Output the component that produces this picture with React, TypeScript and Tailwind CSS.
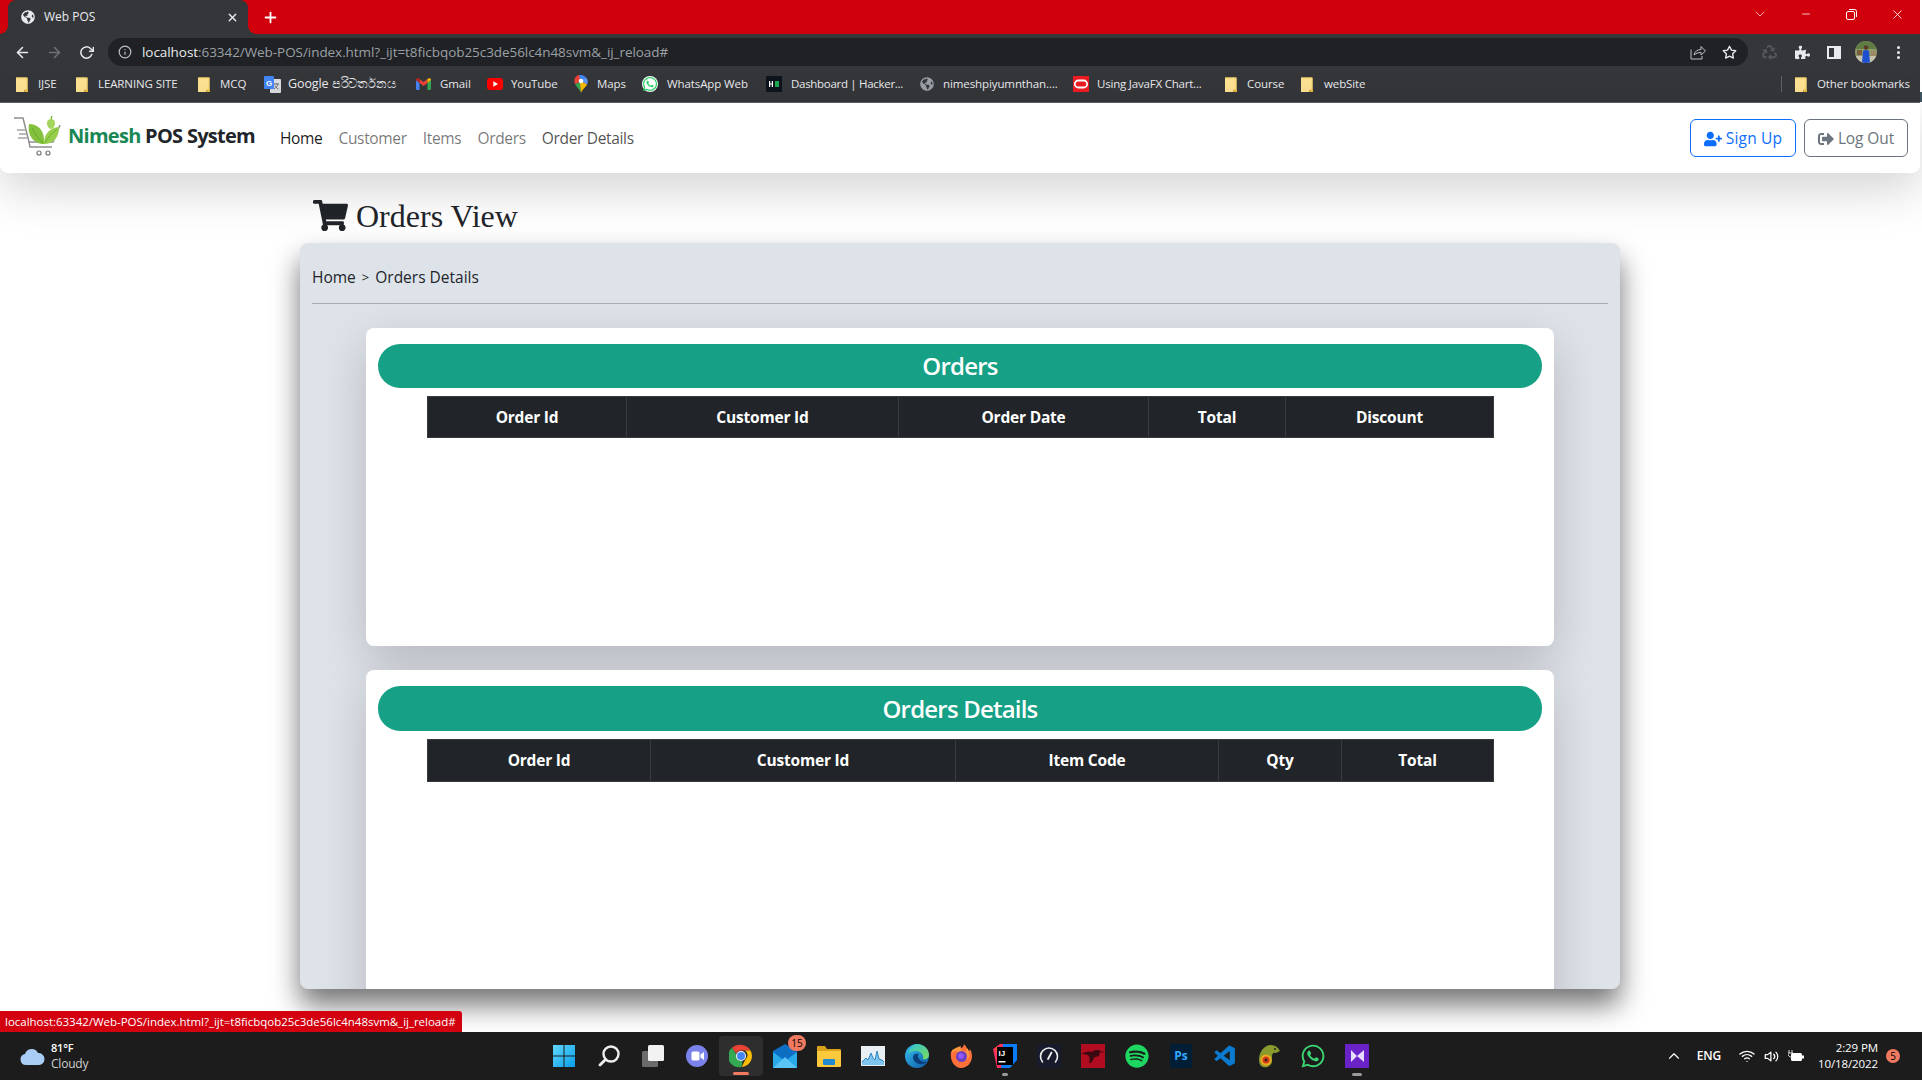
import { FaShoppingCart, FaGlobeAmericas, FaUserPlus, FaSignOutAlt, FaWhatsapp, FaPuzzlePiece, FaSpotify, FaRecycle } from "react-icons/fa";
import { VscVscode } from "react-icons/vsc";
import { FiStar, FiArrowLeft, FiArrowRight, FiRotateCw, FiInfo, FiX, FiPlus, FiMinus, FiChevronDown, FiChevronUp, FiWifi, FiVolume2 } from "react-icons/fi";

const Folder = () => (
  <svg width="12" height="15" viewBox="0 0 12 15" className="shrink-0">
    <path d="M0 .5h11.5V13h-3v2H0z" fill="#fde293" />
    <path d="M8.5 15v-2.5H12V15z" fill="#e8b93a" />
    <path d="M.5 1h10.5v11.5" fill="none" stroke="#f2ce63" strokeWidth="1" />
  </svg>
);
const Translate = () => (
  <svg width="17" height="17" viewBox="0 0 17 17" className="shrink-0">
    <rect x="6" y="3" width="11" height="14" rx="1" fill="#dadce0" />
    <path d="M10 8h5M12.5 7v1M14 8c-.5 2-2 4-4 5M11 9.5c.7 1.500 2 3 3.500 3.500" stroke="#5f6368" strokeWidth=".9" fill="none" />
    <rect width="10" height="13" rx="1" fill="#4285f4" />
    <text x="5" y="9.500" textAnchor="middle" fontSize="8" fontWeight="700" fill="#fff" fontFamily="Liberation Sans">G</text>
  </svg>
);
const Gmail = () => (
  <svg width="15" height="12" viewBox="0 0 15 12" className="shrink-0">
    <path d="M0 2v9a1 1 0 0 0 1 1h2.500V5z" fill="#4285f4" />
    <path d="M15 2v9a1 1 0 0 1-1 1h-2.500V5z" fill="#34a853" />
    <path d="M3.500 5 7.500 8 11.500 5V1L7.500 4 3.500 1z" fill="#ea4335" />
    <path d="M0 2c0-2 2-2.500 3.500-1v4z" fill="#c5221f" />
    <path d="M15 2c0-2-2-2.500-3.500-1v4z" fill="#fbbc04" />
  </svg>
);
const YouTube = () => (
  <svg width="16" height="12" viewBox="0 0 16 12" className="shrink-0">
    <rect width="16" height="12" rx="3" fill="#f00" />
    <path d="M6.300 3.300v5.400L11 6z" fill="#fff" />
  </svg>
);
const MapsPin = () => (
  <svg width="14" height="18" viewBox="0 0 14 18" className="shrink-0">
    <path d="M7 18C5.500 14 2.500 12 1 9l5-2z" fill="#34a853" />
    <path d="M1 9C-1 4 2.500 0 5 0l2 3-1 4z" fill="#ea4335" />
    <path d="M5 0c2-.5 5.500.500 7 2.500L8.500 6 6 3.500z" fill="#4285f4" />
    <path d="M12 2.500C14.500 5.500 14 8 13 9.500L8.500 7V5z" fill="#5e97f6" />
    <path d="M13 9.500C12 12 8.500 14 7 18L6 8l2.500-1z" fill="#fbbc04" />
    <circle cx="7" cy="6" r="2.300" fill="#fff" />
  </svg>
);
const WhatsBadge = () => (
  <span className="flex h-[16px] w-[16px] shrink-0 items-center justify-center rounded-full bg-white">
    <FaWhatsapp size={16} className="text-[#25d366]" />
  </span>
);
const Hacker = () => (
  <svg width="16" height="16" viewBox="0 0 16 16" className="shrink-0">
    <rect width="16" height="16" fill="#0e141e" />
    <path d="M3 5h1.200v2.400h1.600V5H7v6H5.800V8.600H4.200V11H3z" fill="#fff" />
    <rect x="9" y="5" width="4" height="6" fill="#1ba94c" />
  </svg>
);
const Oracle = () => (
  <svg width="16" height="16" viewBox="0 0 16 16" className="shrink-0">
    <rect width="16" height="16" fill="#ed1c24" />
    <rect x="1.800" y="4.500" width="12.400" height="7" rx="3.500" fill="none" stroke="#fff" strokeWidth="1.800" />
  </svg>
);
const Globe = () => <FaGlobeAmericas size={14} className="shrink-0 text-[#9aa0a6]" />;

const bookmarks = [
  { icon: <Folder />, label: "IJSE", w: "w-[20px]", g: "gap-[10px]", m: "mr-[18px]", t: "" },
  { icon: <Folder />, label: "LEARNING SITE", w: "w-[82px]", g: "gap-[10px]", m: "mr-[18px]", t: "" },
  { icon: <Folder />, label: "MCQ", w: "w-[28px]", g: "gap-[10px]", m: "mr-[16px]", t: "" },
  { icon: <Translate />, label: "Google පරිවර්තනය", w: "w-[112px]", g: "gap-[7px]", m: "mr-[16px]", t: "text-[12.500px]" },
  { icon: <Gmail />, label: "Gmail", w: "w-[30px]", g: "gap-[9px]", m: "mr-[17px]", t: "" },
  { icon: <YouTube />, label: "YouTube", w: "w-[46px]", g: "gap-[8px]", m: "mr-[17px]", t: "" },
  { icon: <MapsPin />, label: "Maps", w: "w-[29px]", g: "gap-[9px]", m: "mr-[16px]", t: "" },
  { icon: <WhatsBadge />, label: "WhatsApp Web", w: "w-[82px]", g: "gap-[9px]", m: "mr-[17px]", t: "" },
  { icon: <Hacker />, label: "Dashboard | Hacker...", w: "w-[111px]", g: "gap-[9px]", m: "mr-[18px]", t: "tracking-[-0.3px]" },
  { icon: <Globe />, label: "nimeshpiyumnthan....", w: "w-[113px]", g: "gap-[9px]", m: "mr-[17px]", t: "" },
  { icon: <Oracle />, label: "Using JavaFX Chart...", w: "w-[109px]", g: "gap-[8px]", m: "mr-[19px]", t: "tracking-[-0.2px]" },
  { icon: <Folder />, label: "Course", w: "w-[36px]", g: "gap-[10px]", m: "mr-[18px]", t: "" },
  { icon: <Folder />, label: "webSite", w: "w-[42px]", g: "gap-[11px]", m: "", t: "" },
];

const Logo = () => (
  <svg width="50" height="46" viewBox="0 0 50 46" className="shrink-0">
    <path d="M1 3h9l6 24h24l7-17" fill="none" stroke="#8f8f8f" strokeWidth="1.500" />
    <path d="M4 15h9M6 19h8M5 23h9" stroke="#a5a5a5" strokeWidth="1.300" />
    <path d="M16 27l1 5h22" fill="none" stroke="#8f8f8f" strokeWidth="1.500" />
    <circle cx="26" cy="38" r="2" fill="none" stroke="#777" strokeWidth="1.200" />
    <circle cx="35" cy="38" r="2" fill="none" stroke="#777" strokeWidth="1.200" />
    <path d="M16 9c9 0 16 6 15 20-10 0-17-8-15-20z" fill="#84c13c" />
    <path d="M46 12c0 10-5 17-15 17 0-10 5-16 15-17z" fill="#97cf4d" />
    <path d="M19 13c3 6 6 10 11 15M44 14c-5 4-9 8-12 14" stroke="#5e9e25" strokeWidth=".7" fill="none" />
    <path d="M34 8c0-3 2-4 4-4s4 1 4 4-2 6-4 6-4-3-4-6z" fill="#a4d55c" />
    <path d="M38 4l1-3" stroke="#6fae2f" strokeWidth="1.200" />
  </svg>
);

function DataTable({ cols, h }: { cols: { t: string; w: string }[]; h: string }) {
  return (
    <table className="ml-[49px] mt-2 w-[1066px] table-fixed border-collapse bg-[#212529] text-white">
      <thead>
        <tr className={h}>
          {cols.map((c) => (
            <th key={c.t} className={`${c.w} border border-[#373b3e] pt-px text-center text-[15.500px] font-bold tracking-[-0.2px]`}>
              {c.t}
            </th>
          ))}
        </tr>
      </thead>
    </table>
  );
}

function Panel({ title, cols, pill, row, h }: { title: string; cols: { t: string; w: string }[]; pill: string; row: string; h: string }) {
  return (
    <section className={`${h} shrink-0 rounded-lg bg-white px-3 pt-4 shadow-[0_16px_48px_rgba(0,0,0,0.175)]`}>
      <div className={`${pill} flex items-center justify-center rounded-[22px] bg-[#16a085] text-[24px] font-semibold tracking-[-0.8px] text-white`}>
        {title}
      </div>
      <DataTable cols={cols} h={row} />
    </section>
  );
}

const Win = () => (
  <svg width="24" height="24" viewBox="0 0 24 24">
    <defs>
      <linearGradient id="w1" x1="0" y1="0" x2="1" y2="1"><stop offset="0" stopColor="#5fd8fb" /><stop offset="1" stopColor="#0a9de8" /></linearGradient>
    </defs>
    <path d="M0 1h10.500v10.500H0zM11.500 1H22v10.500H11.500zM0 12.500h10.500V23H0zM11.500 12.500H22V23H11.500z" fill="url(#w1)" />
  </svg>
);
const Search = () => (
  <svg width="24" height="24" viewBox="0 0 24 24" fill="none">
    <circle cx="14" cy="10" r="7.500" stroke="#eee" strokeWidth="2.400" />
    <path d="M8.500 15.500 3 21" stroke="#eee" strokeWidth="2.800" strokeLinecap="round" />
  </svg>
);
const TaskView = () => (
  <svg width="24" height="24" viewBox="0 0 24 24">
    <rect x="1" y="7" width="16" height="16" rx="1.500" fill="#6b6b6b" />
    <rect x="7" y="1" width="16" height="16" rx="1.500" fill="#f2f2f2" />
  </svg>
);
const Chat = () => (
  <svg width="24" height="24" viewBox="0 0 24 24">
    <circle cx="12" cy="12" r="11" fill="#7b83eb" />
    <rect x="6.500" y="7.500" width="8" height="9" rx="1.500" fill="#fff" />
    <path d="M15.500 10.500 19 8v8l-3.500-2.500z" fill="#fff" />
  </svg>
);
const Chrome = () => (
  <svg width="24" height="24" viewBox="0 0 24 24">
    <path d="M12 1a11 11 0 0 1 9.500 5.500H12A5.500 5.500 0 0 0 7 9.500L3 3.800A11 11 0 0 1 12 1z" fill="#ea4335" />
    <path d="M21.500 6.500A11 11 0 0 1 12.500 23l4.300-8A5.500 5.500 0 0 0 16 6.500z" fill="#fbbc04" />
    <path d="M3 3.800 7.500 11a5.500 5.500 0 0 0 6 6.300L12.500 23A11 11 0 0 1 3 3.800z" fill="#34a853" />
    <circle cx="12" cy="12" r="5" fill="#fff" />
    <circle cx="12" cy="12" r="4" fill="#4285f4" />
  </svg>
);
const Mail = () => (
  <svg width="24" height="24" viewBox="0 0 24 24">
    <path d="M0 7 12 0l12 7v17H0z" fill="#0c6fc4" />
    <path d="M0 8 12 17l12-9v16H0z" fill="#29a8ea" />
    <path d="M0 24 12 13l12 11z" fill="#5ac4f6" />
  </svg>
);
const Explorer = () => (
  <svg width="24" height="24" viewBox="0 0 24 24">
    <path d="M0 3a1 1 0 0 1 1-1h7l2 3h13a1 1 0 0 1 1 1v3H0z" fill="#d9a21a" />
    <path d="M0 7h24v15a1 1 0 0 1-1 1H1a1 1 0 0 1-1-1z" fill="#fcc93d" />
    <rect x="6" y="15" width="12" height="6" rx="1" fill="#1f8ad2" />
  </svg>
);
const Perf = () => (
  <svg width="24" height="24" viewBox="0 0 24 24">
    <rect y="2" width="24" height="20" fill="#e9eef2" />
    <path d="M1 18 5 14l2 2 3-7 2 5 2 2 2-9 2 8 3 1 2 2v3H1z" fill="#7ec4ef" />
    <path d="M1 18 5 14l2 2 3-7 2 5 2 2 2-9 2 8 3 1 2 2" fill="none" stroke="#2f86c4" strokeWidth="1" />
  </svg>
);
const Edge = () => (
  <svg width="24" height="24" viewBox="0 0 24 24">
    <defs>
      <linearGradient id="e1" x1="0" y1="0" x2="1" y2="1"><stop offset="0" stopColor="#35c1f1" /><stop offset="1" stopColor="#0c59a4" /></linearGradient>
      <linearGradient id="e2" x1="0" y1="0" x2="1" y2="1"><stop offset="0" stopColor="#30c5d8" /><stop offset="1" stopColor="#7cd957" /></linearGradient>
    </defs>
    <circle cx="12" cy="12" r="12" fill="url(#e1)" />
    <path d="M12 0c7 0 12 5 12 11 0 3-3 5-6 4 1-4-2-8-7-8-3 0-6 1-8 3C5 4 8 0 12 0z" fill="url(#e2)" />
    <path d="M8 13c0 5 5 8 10 7 2-.5 3-1.500 4-3-2 1.500-5 1-7-1-2-2-3-5-1-6-3-1-6 0-6 3z" fill="#0b3f7a" />
  </svg>
);
const Firefox = () => (
  <svg width="24" height="24" viewBox="0 0 24 24">
    <path d="M2 8C.5 17 6 24 12 24s11-5 11-12c0-3-1-5-2-7-.5 2-1.500 3-2 3 0-3-2-6-4-8 0 3-3 4-5 6-2-1-3-1-4 0-.5-.5-2-1-3 0 0 1 0 1 .5 2z" fill="#ff7139" />
    <path d="M2 8c1 1 3 0 4-1 3 0 4 2 4 3H7c0 3 3 4 6 3-1 2-4 3-6 2 3 4 10 3 13-2 1-3 0-7-2-9 0 2-1 4-3 4-2 0-4-3-3-6C9 3 5 4 2 8z" fill="#ff9640" />
    <circle cx="12.500" cy="12.500" r="5.500" fill="#6b3fc1" />
    <circle cx="12" cy="12" r="2.800" fill="#9059ff" />
  </svg>
);
const Intellij = () => (
  <svg width="24" height="24" viewBox="0 0 24 24">
    <path d="M0 5 7 0h6l-2 24H4z" fill="#fe315d" />
    <path d="M10 0h14v16l-7 8H8z" fill="#087cfa" />
    <path d="M3 3h6l2 10-6 6z" fill="#f97a12" />
    <rect x="4" y="3" width="16" height="18" fill="#000" />
    <text x="5.500" y="12" fontSize="8" fontWeight="700" fill="#fff" fontFamily="Liberation Sans">IJ</text>
    <rect x="5.500" y="17" width="7" height="1.500" fill="#fff" />
  </svg>
);
const Speed = () => (
  <svg width="24" height="24" viewBox="0 0 24 24" fill="none">
    <rect width="24" height="24" fill="#181b2c" />
    <path d="M5.500 18a8.500 8.500 0 1 1 13 0" stroke="#eee" strokeWidth="1.600" strokeLinecap="round" />
    <path d="M11 15l3.500-6.500" stroke="#eee" strokeWidth="1.800" strokeLinecap="round" />
  </svg>
);
const Kali = () => (
  <svg width="24" height="24" viewBox="0 0 24 24">
    <rect width="24" height="24" fill="#b10c1f" />
    <path d="M0 10c4-2 8-3 11-2 2-2 5-3 9-1l4 2-5-1c-1 1 0 3-1 4-2 1-4 0-5 2-1 3-3 5-5 5 1-3 1-6-1-8-2-1-5-1-7-1z" fill="#3b0a10" />
  </svg>
);
const Ps = () => (
  <div className="flex h-[24px] w-[22px] items-center justify-center rounded-[3px] bg-[#001e36] text-[12px] font-bold text-[#31a8ff]">Ps</div>
);
const Chameleon = () => (
  <svg width="24" height="24" viewBox="0 0 24 24" fill="none">
    <path d="M2 16c0-8 5-15 12-15 4 0 7 2 9 6l-4 2c-2-1-4 0-4 3v6c-1 4-5 6-9 5-3-1-4-4-4-7z" fill="#8a9a2c" />
    <circle cx="9" cy="16" r="5.500" fill="#f0a81c" />
    <circle cx="9" cy="16" r="3.500" fill="#d43a1f" />
    <circle cx="9" cy="16" r="1.500" fill="#3b2a10" />
    <circle cx="18" cy="5" r="1" fill="#222" />
  </svg>
);
const VsPurple = () => (
  <svg width="24" height="24" viewBox="0 0 24 24">
    <rect width="24" height="24" rx="1" fill="#6a22c9" />
    <path d="M6 6v12l6-6zM12 12l7-6v12z" fill="#e7dcff" />
  </svg>
);
const Avatar = () => (
  <svg width="22" height="22" viewBox="0 0 22 22" className="ml-[14px]">
    <defs>
      <clipPath id="av"><circle cx="11" cy="11" r="11" /></clipPath>
    </defs>
    <g clipPath="url(#av)">
      <rect width="22" height="22" fill="#8c9a6a" />
      <rect width="22" height="8" fill="#5f7d45" />
      <rect y="15" width="22" height="7" fill="#c5c2ae" />
      <rect x="2" y="9" width="5" height="5" fill="#7a5c3f" />
      <rect x="16" y="10" width="5" height="5" fill="#a08a66" />
      <path d="M7 22l1-12q3-2 6 0l1 12z" fill="#1d4fd0" />
      <circle cx="11" cy="6.500" r="2.300" fill="#5a3a28" />
    </g>
  </svg>
);
const Share = () => (
  <svg width="16" height="16" viewBox="0 0 16 16" fill="none" stroke="#bdc1c6" strokeWidth="1" className="mr-[16px]">
    <path d="M1 5.500v9.500h11v-3" />
    <path d="M4 11c.6-3.500 3.500-5.500 7-5.500V2.500L15.500 7 11 11V8.500C8 8.500 6 9.300 4 11z" />
  </svg>
);

const task = [
  { el: <Win /> }, { el: <Search /> }, { el: <TaskView /> }, { el: <Chat /> },
  { el: <Chrome />, active: true }, { el: <Mail />, badge: "15" }, { el: <Explorer /> }, { el: <Perf /> },
  { el: <Edge /> }, { el: <Firefox /> }, { el: <Intellij />, dot: true }, { el: <Speed /> },
  { el: <Kali /> }, { el: <FaSpotify size={24} className="text-[#1ed760]" /> }, { el: <Ps /> },
  { el: <VscVscode size={25} className="text-[#0a7bd1]" /> }, { el: <Chameleon /> },
  { el: <FaWhatsapp size={26} className="text-[#3bd671]" /> }, { el: <VsPurple />, bar: true },
];

const ordersCols = [
  { t: "Order Id", w: "w-[199px]" }, { t: "Customer Id", w: "w-[272px]" }, { t: "Order Date", w: "w-[250px]" },
  { t: "Total", w: "w-[137px]" }, { t: "Discount", w: "w-[208px]" },
];
const detailCols = [
  { t: "Order Id", w: "w-[223px]" }, { t: "Customer Id", w: "w-[305px]" }, { t: "Item Code", w: "w-[263px]" },
  { t: "Qty", w: "w-[123px]" }, { t: "Total", w: "w-[152px]" },
];

export default function App() {
  return (
    <div className="flex h-screen w-full flex-col overflow-hidden bg-white font-['Open_Sans',sans-serif] text-[#212529]">
      <div className="flex shrink-0">
        <div className="flex w-[1920px] flex-col">
          {/* tab strip */}
          <div className="flex h-[34px] shrink-0 items-end bg-[#d0000c] pl-2 text-white">
            <div className="relative flex h-[34px] w-[240px] items-center rounded-t-lg bg-[#35363a] pl-[13px] pr-[9px]">
              <span className="absolute bottom-0 left-[-8px] h-2 w-2 bg-[radial-gradient(circle_at_0_0,transparent_7.500px,#35363a_8px)]" />
              <span className="absolute bottom-0 right-[-8px] h-2 w-2 bg-[radial-gradient(circle_at_100%_0,transparent_7.500px,#35363a_8px)]" />
              <FaGlobeAmericas size={14} className="text-[#e8eaed]" />
              <span className="ml-[9px] flex-1 text-[12px] text-[#e8eaed]">Web POS</span>
              <FiX size={13} strokeWidth={2.500} className="text-[#e8eaed]" />
            </div>
            <FiPlus size={17} strokeWidth={2.500} className="mb-2 ml-[14px]" />
            <div className="flex-1" />
            <div className="flex h-[28px] items-center self-start">
              <FiChevronDown size={16} strokeWidth={1} className="mr-[32px]" />
              <FiMinus size={12} strokeWidth={1.500} className="mr-[34px]" />
              <svg width="11" height="11" viewBox="0 0 11 11" fill="none" stroke="#fff" className="mr-[33px]">
                <rect x=".5" y="2.500" width="8" height="8" rx="1.500" />
                <path d="M3 .5h5.500a2 2 0 0 1 2 2V8" />
              </svg>
              <FiX size={15} strokeWidth={1.300} className="mr-[15px]" />
            </div>
          </div>
          {/* toolbar */}
          <div className="flex h-[32px] shrink-0 items-end bg-[#35363a] pl-[14px]">
            <div className="flex h-[28px] items-center">
              <FiArrowLeft size={17} strokeWidth={2.200} className="text-[#e8eaed]" />
              <FiArrowRight size={17} strokeWidth={2.200} className="ml-[15px] text-[#6f7175]" />
              <FiRotateCw size={15} strokeWidth={2.400} className="ml-[16px] text-[#e8eaed]" />
            </div>
            <div className="ml-[14px] flex h-[28px] w-[1640px] items-center rounded-full bg-[#202124] pl-[10px] pr-[11px] text-[13.500px]">
              <FiInfo size={14} className="text-[#bdc1c6]" />
              <span className="ml-[10px] w-[525px] whitespace-nowrap tracking-[-0.06px]">
                <span className="text-[#e8eaed]">localhost</span>
                <span className="text-[#9aa0a6]">:63342/Web-POS/index.html?_ijt=t8ficbqob25c3de56lc4n48svm&amp;_ij_reload#</span>
              </span>
              <div className="flex-1" />
              <Share />
              <FiStar size={15} strokeWidth={2.200} className="text-[#e8eaed]" />
            </div>
            <div className="ml-[14px] flex h-[28px] items-center">
              <FaRecycle size={15} className="text-[#55575b]" />
              <FaPuzzlePiece size={15} className="ml-[18px] text-[#e8eaed]" />
              <span className="ml-[17px] flex h-[13px] w-[14px] justify-end border-2 border-[#e8eaed] bg-transparent"><span className="h-full w-[5px] bg-[#e8eaed]" /></span>
              <Avatar />
              <span className="ml-[20px] flex flex-col gap-[2px]">
                <span className="h-[3px] w-[3px] rounded-full bg-[#e8eaed]" />
                <span className="h-[3px] w-[3px] rounded-full bg-[#e8eaed]" />
                <span className="h-[3px] w-[3px] rounded-full bg-[#e8eaed]" />
              </span>
            </div>
          </div>
          {/* bookmarks */}
          <div className="flex h-[37px] shrink-0 items-center border-b border-[#5f6368] bg-[#35363a] pl-4 text-[11.500px] tracking-[-0.1px] text-[#e8eaed]">
            {bookmarks.map((b) => (
              <div key={b.label} className={`flex items-center ${b.g} ${b.m}`}>
                {b.icon}
                <span className={`${b.w} ${b.t} whitespace-nowrap`}>{b.label}</span>
              </div>
            ))}
            <div className="flex-1" />
            <span className="h-[16px] w-px bg-[#5f6368]" />
            <div className="ml-[13px] mr-[11px] flex items-center gap-[10px]">
              <Folder />
              <span className="w-[92px] whitespace-nowrap">Other bookmarks</span>
            </div>
          </div>
        </div>
        <div className="flex w-[2px] flex-col bg-white">
          <div className="flex-1" />
          <div className="mb-px h-[10px] bg-[#3d5560]" />
        </div>
      </div>
      {/* navbar */}
      <nav className="relative z-10 mr-[2px] flex h-[70px] shrink-0 items-center rounded-b-lg bg-white pl-[13px] pr-[12px] shadow-[0_16px_48px_rgba(0,0,0,0.175)]">
        <Logo />
        <span className="ml-[5px] -mt-[4px] w-[187px] whitespace-nowrap text-[20px] font-bold tracking-[-0.72px]">
          <span className="text-[#198754]">Nimesh</span> POS System
        </span>
        <div className="ml-[25px] mt-[1px] flex items-center gap-[16px] text-[15.500px] tracking-[-0.33px]">
          <span className="text-black/90">Home</span>
          <span className="text-black/55">Customer</span>
          <span className="text-black/55">Items</span>
          <span className="text-black/55">Orders</span>
          <span className="text-black/70">Order Details</span>
        </div>
        <div className="flex-1" />
        <button className="flex h-[38px] w-[106px] items-center justify-center gap-1 rounded-md border border-[#0d6efd] pt-px text-[15.500px] tracking-[0.2px] text-[#0d6efd]">
          <FaUserPlus size={18} /> Sign Up
        </button>
        <button className="ml-2 flex h-[38px] w-[104px] items-center justify-center gap-1 rounded-md border border-[#6c757d] pt-px text-[15.500px] tracking-[-0.1px] text-[#6c757d]">
          <FaSignOutAlt size={16} /> Log Out
        </button>
      </nav>
      {/* page */}
      <main className="relative flex min-h-0 flex-1 flex-col bg-white pl-[300px]">
        <div className="flex h-[70px] shrink-0 items-center pl-[13px] pt-[14px]">
          <FaShoppingCart size={35} className="text-[#212529]" />
          <h2 className="ml-2 mt-[2px] font-['Liberation_Serif',serif] text-[32px] leading-none">Orders View</h2>
        </div>
        <div className="flex h-[746px] w-[1320px] shrink-0 flex-col overflow-hidden rounded-lg bg-[#dee2e9] px-3 shadow-[0_16px_28px_rgba(0,0,0,0.55)]">
          <div className="flex h-[61px] shrink-0 items-center border-b border-[#a9adb8] pt-[10px] text-[15.500px]">
            Home <span className="mx-[6px] text-[13px]">&gt;</span> Orders Details
          </div>
          <div className="mt-[24px] flex flex-col gap-[24px] px-[54px]">
            <Panel title="Orders" cols={ordersCols} pill="h-[44px]" row="h-[41px]" h="h-[318px]" />
            <Panel title="Orders Details" cols={detailCols} pill="h-[45px]" row="h-[42px]" h="h-[400px]" />
          </div>
        </div>
        <div className="absolute bottom-0 left-0 z-20 flex h-[21px] w-[462px] items-center whitespace-nowrap rounded-tr-[3px] bg-[#d3000f] pl-[5px] text-[11.500px] tracking-[-0.02px] text-white">
          localhost:63342/Web-POS/index.html?_ijt=t8ficbqob25c3de56lc4n48svm&amp;_ij_reload#
        </div>
      </main>
      {/* taskbar */}
      <footer className="relative flex h-[48px] shrink-0 items-center bg-[#1c1c1c] text-white">
        <div className="flex items-center pl-[20px]">
          <svg width="25" height="17" viewBox="0 0 25 17">
            <path d="M6 17a5.500 5.500 0 0 1-1-10.900A7 7 0 0 1 18 5a6 6 0 0 1 1 12z" fill="#a9cdf5" />
          </svg>
          <div className="ml-[6px] flex flex-col text-[12px] leading-[16px] tracking-[-0.2px]">
            <span className="text-[11px] font-semibold">81°F</span>
            <span className="text-[#d0d0d0]">Cloudy</span>
          </div>
        </div>
        <div className="absolute left-[543px] flex items-center">
          {task.map((t, i) => (
            <div key={i} className={`relative flex h-[40px] w-[44px] items-center justify-center ${t.active ? "rounded bg-[#2e2e2e]" : ""}`}>
              {t.el}
              {t.badge && (
                <span className="absolute right-[1px] top-[-1px] flex h-[16px] w-[18px] items-center justify-center rounded-full bg-[#ef7a5f] text-[10px] text-black">{t.badge}</span>
              )}
              {t.active && <span className="absolute bottom-[1px] h-[3px] w-[16px] rounded bg-[#ef7a5f]" />}
              {t.dot && <span className="absolute bottom-0 h-[3px] w-[6px] rounded bg-[#9a9a9a]" />}
              {t.bar && <span className="absolute bottom-0 h-[3px] w-[10px] rounded bg-[#9a9a9a]" />}
            </div>
          ))}
        </div>
        <div className="flex-1" />
        <div className="flex items-center pr-[22px] text-[12px]">
          <FiChevronUp size={18} strokeWidth={1.500} />
          <span className="ml-[14px] font-semibold tracking-[-0.2px]">ENG</span>
          <FiWifi size={16} className="ml-[18px]" />
          <FiVolume2 size={15} className="ml-[9px]" />
          <svg width="16" height="13" viewBox="0 0 16 13" className="ml-[9px]">
            <rect x="3" y="3" width="11" height="8" rx="1.500" fill="#fff" />
            <rect x="14" y="5.500" width="2" height="3" fill="#fff" />
            <path d="M1 0v3M4 0v3M0 3h5v2L3 7H2L0 5z" fill="none" stroke="#fff" strokeWidth=".8" />
          </svg>
          <div className="ml-[10px] flex w-[64px] flex-col items-end text-[11.500px] font-medium leading-[16px] tracking-[-0.1px]">
            <span>2:29 PM</span>
            <span>10/18/2022</span>
          </div>
          <span className="ml-[8px] flex h-[14px] w-[14px] items-center justify-center rounded-full bg-[#ef7a5f] text-[10px] text-black">5</span>
        </div>
      </footer>
    </div>
  );
}
